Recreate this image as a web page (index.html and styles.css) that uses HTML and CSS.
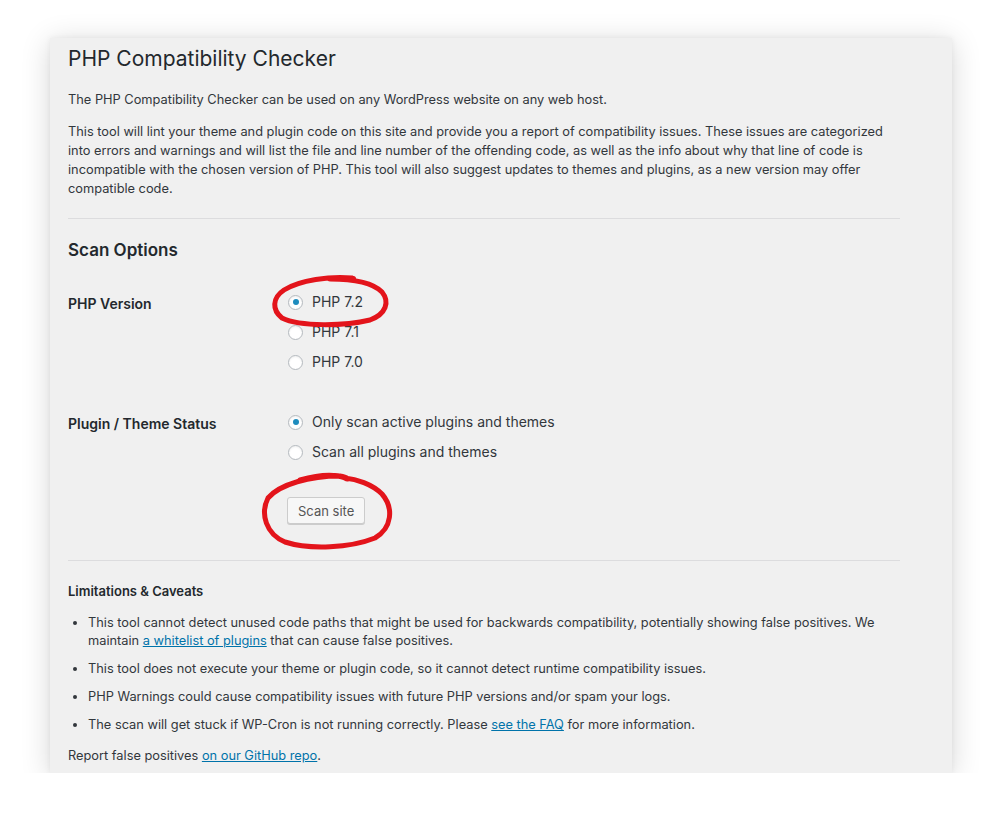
FILE: index.html
```html
<!DOCTYPE html>
<html lang="en">
<head>
<meta charset="utf-8">
<title>PHP Compatibility Checker</title>
<link rel="stylesheet" href="styles.css">
</head>
<body>
<div class="card">
  <h1 class="title">PHP Compatibility Checker</h1>
  <p class="intro">The PHP Compatibility Checker can be used on any WordPress website on any web host.</p>
  <p class="desc">This tool will lint your theme and plugin code on this site and provide you a report of compatibility issues. These issues are categorized into errors and warnings and will list the file and line number of the offending code, as well as the info about why that line of code is incompatible with the chosen version of PHP. This tool will also suggest updates to themes and plugins, as a new version may offer compatible code.</p>
  <hr class="rule">
  <h2 class="section">Scan Options</h2>
  <div class="form">
    <div class="row">
      <div class="label">PHP Version</div>
      <div class="options">
        <label class="opt"><span class="radio checked"></span>PHP 7.2</label>
        <label class="opt"><span class="radio"></span>PHP 7.1</label>
        <label class="opt"><span class="radio"></span>PHP 7.0</label>
      </div>
    </div>
    <div class="row row2">
      <div class="label">Plugin / Theme Status</div>
      <div class="options">
        <label class="opt"><span class="radio checked"></span>Only scan active plugins and themes</label>
        <label class="opt"><span class="radio"></span>Scan all plugins and themes</label>
        <div class="btnwrap"><button class="button">Scan site</button></div>
      </div>
    </div>
  </div>
  <hr class="rule rule2">
  <h3 class="caveats">Limitations &amp; Caveats</h3>
  <ul class="list">
    <li>This tool cannot detect unused code paths that might be used for backwards compatibility, potentially showing false positives. We maintain <a href="#">a whitelist of plugins</a> that can cause false positives.</li>
    <li>This tool does not execute your theme or plugin code, so it cannot detect runtime compatibility issues.</li>
    <li>PHP Warnings could cause compatibility issues with future PHP versions and/or spam your logs.</li>
    <li>The scan will get stuck if WP-Cron is not running correctly. Please <a href="#">see the FAQ</a> for more information.</li>
  </ul>
  <p class="report">Report false positives <a href="#">on our GitHub repo</a>.</p>
</div>
<svg class="marks" width="1001" height="826" viewBox="0 0 1001 826" aria-hidden="true">
  <path d="M340 279 C 352 277, 356 279, 352 278 C 330 276, 300 280, 284 290 C 272 298, 272 310, 282 318 C 300 327, 345 326, 370 320 C 386 314, 390 302, 382 292 C 372 282, 350 279, 330 279" />
  <path d="M300 480 C 318 475, 335 474, 345 478 C 350 481, 348 477, 340 476 C 310 476, 280 484, 268 498 C 260 514, 266 534, 285 542 C 310 550, 350 548, 375 538 C 392 528, 394 508, 382 494 C 372 484, 356 479, 345 478" />
</svg>
</body>
</html>
```

FILE: styles.css
```css
html, body {
  margin: 0;
  padding: 0;
  background: #ffffff;
}
body {
  font-family: Inter, "Noto Sans", "Liberation Sans", sans-serif;
  color: #32373c;
  -webkit-font-smoothing: antialiased;
}
.card {
  box-sizing: border-box;
  width: 902px;
  height: 735px;
  margin: 38px 0 0 50px;
  padding: 7px 52px 0 18px;
  background: #f0f0f0;
  box-shadow: 0 4px 28px rgba(0,0,0,0.16), 0 0 6px rgba(0,0,0,0.06);
}
.title {
  margin: 0;
  font-size: 21px;
  font-weight: 400;
  line-height: 28px;
  color: #23282d;
}
.intro {
  margin: 17px 0 0;
  font-size: 12.8px;
  line-height: 19px;
}
.desc {
  margin: 13px 0 0;
  font-size: 12.8px;
  line-height: 19px;
}
.rule {
  border: 0;
  border-top: 1px solid #dcdcde;
  margin: 20px 0 0;
}
.section {
  margin: 20px 0 0;
  font-size: 17px;
  font-weight: 600;
  line-height: 22px;
  color: #23282d;
}
.form {
  margin-top: 29px;
}
.row {
  display: flex;
}
.row2 {
  margin-top: 36px;
}
.label {
  width: 220px;
  padding-top: 2px;
  font-size: 14px;
  font-weight: 600;
  color: #23282d;
  line-height: 24px;
}
.options {
  display: flex;
  flex-direction: column;
  gap: 6px;
}
.opt {
  display: flex;
  align-items: center;
  font-size: 14px;
  line-height: 24px;
  color: #32373c;
}
.radio {
  box-sizing: border-box;
  width: 15px;
  height: 15px;
  border-radius: 50%;
  border: 1px solid #b4b9be;
  background: #fff;
  margin: 0 9px 0 0;
  position: relative;
  box-shadow: inset 0 1px 2px rgba(0,0,0,0.07);
}
.radio.checked::after {
  content: "";
  position: absolute;
  left: 3.5px;
  top: 3.5px;
  width: 6px;
  height: 6px;
  border-radius: 50%;
  background: #1e8cbe;
}
.btnwrap {
  margin-top: 27px;
}
.button {
  font-family: inherit;
  font-size: 13px;
  color: #555;
  height: 27px;
  padding: 0 10px;
  background: #f7f7f7;
  border: 1px solid #cccccc;
  border-radius: 3px;
  box-shadow: 0 1px 0 #cccccc;
  margin-left: -1px;
}
.rule2 {
  margin-top: 36px;
}
.caveats {
  margin: 21px 0 0;
  font-size: 13px;
  font-weight: 600;
  line-height: 18px;
  color: #23282d;
}
.list {
  margin: 14px 0 0;
  padding: 0 0 0 20px;
  font-size: 12.8px;
  line-height: 18px;
}
.list li {
  margin-bottom: 10px;
}
a {
  color: #0073aa;
  text-decoration: underline;
}
.report {
  margin: 13px 0 0;
  font-size: 12.8px;
  line-height: 18px;
}
.marks {
  position: absolute;
  left: 0;
  top: 0;
  pointer-events: none;
}
.marks path {
  fill: none;
  stroke: #e3141b;
  stroke-width: 5;
  stroke-linecap: round;
  stroke-linejoin: round;
}
```
